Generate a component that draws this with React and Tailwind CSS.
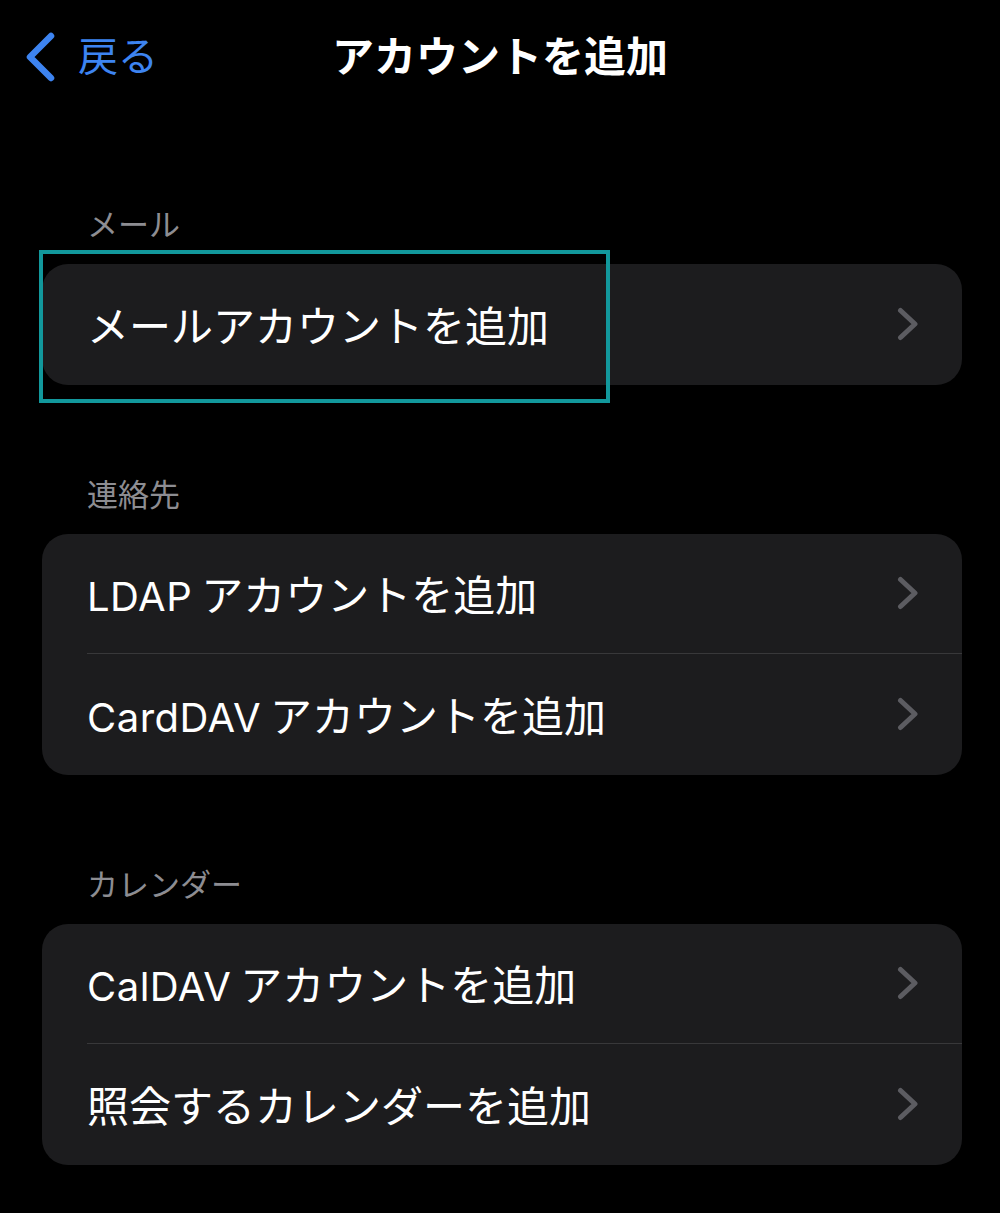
const font = { fontFamily: '"Inter", "Noto Sans CJK JP", sans-serif' };

const sections = [
  { title: "メール", rows: [{ label: "メールアカウントを追加" }], highlight: true },
  { title: "連絡先", rows: [{ latin: "LDAP", label: "アカウントを追加" }, { latin: "CardDAV", label: "アカウントを追加" }] },
  { title: "カレンダー", rows: [{ latin: "CalDAV", label: "アカウントを追加" }, { label: "照会するカレンダーを追加" }] },
];

function Chevron() {
  return (
    <svg className="h-[34px] w-[22px] flex-none" viewBox="0 0 22 34" fill="none">
      <path d="M3.5 3.5L18 17L3.5 30.5" stroke="#5c5c61" strokeWidth="5" strokeLinecap="round" strokeLinejoin="round" />
    </svg>
  );
}

function Row({ row, last }) {
  return (
    <div className="flex h-[120.5px] items-stretch pl-[45px]">
      <div className={`flex flex-1 items-center justify-between pr-[43px] ${last ? "" : "border-b-[1.5px] border-[#38383a]"}`}>
        <span className="mt-[6px] text-[42px] leading-none text-white">
          {row.latin && <span className="mr-[9px] text-[40px] tracking-[0.5px]">{row.latin}</span>}
          {row.label}
        </span>
        <Chevron />
      </div>
    </div>
  );
}

export default function App() {
  return (
    <div className="min-h-[1213px] w-full bg-black pb-10" style={font}>
      {/* nav */}
      <div className="grid h-[114px] grid-cols-[1fr_auto_1fr] items-center">
        <div className="flex items-center pl-[24px]">
          <svg className="h-[50px] w-[32px]" viewBox="0 0 32 50" fill="none">
            <path d="M27 4L6 25L27 46" stroke="#3d84f1" strokeWidth="6.5" strokeLinecap="round" strokeLinejoin="round" />
          </svg>
          <span className="ml-[22px] text-[40px] leading-none text-[#3d84f1]">戻る</span>
        </div>
        <h1 className="text-[42px] font-bold leading-none text-white">アカウントを追加</h1>
        <div />
      </div>

      <div className="flex flex-col gap-[90px] pl-[42px] pr-[38px] pt-[91px]">
        {sections.map((s) => (
          <div key={s.title}>
            <div className="mb-[19px] h-[40px] pl-[45px] text-[31px] leading-[40px] text-[#8d8d92]">{s.title}</div>
            <div className="relative">
              <div className="overflow-hidden rounded-[26px] bg-[#1c1c1e]">
                {s.rows.map((r, i) => (
                  <Row key={i} row={r} last={i === s.rows.length - 1} />
                ))}
              </div>
              {s.highlight && (
                <div className="pointer-events-none absolute left-[-3px] top-[-14px] h-[153px] w-[571px] border-4 border-[#12989c]" />
              )}
            </div>
          </div>
        ))}
      </div>
    </div>
  );
}
